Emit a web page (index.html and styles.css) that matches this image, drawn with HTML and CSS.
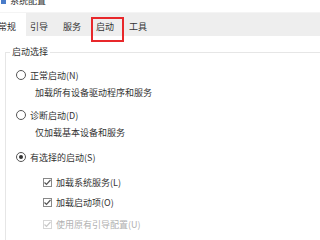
FILE: index.html
```html
<!DOCTYPE html>
<html>
<head>
<meta charset="utf-8">
<link rel="stylesheet" href="styles.css">
</head>
<body>
<div class="win">
  <div class="title">
    <svg class="ticon" width="6" height="8" viewBox="0 0 6 8"><rect x="0" y="0" width="5" height="7" fill="#4a7cc9"/></svg>
    <span>系统配置</span>
  </div>
  <div class="tabs">
    <div class="tab sel">常规</div>
    <div class="tab">引导</div>
    <div class="tab">服务</div>
    <div class="tab">启动</div>
    <div class="tab">工具</div>
  </div>
  <div class="content">
    <div class="group">
      <div class="legend">启动选择</div>
      <div class="opt first"><span class="radio"></span><span>正常启动(N)</span></div>
      <div class="desc">加载所有设备驱动程序和服务</div>
      <div class="opt"><span class="radio"></span><span>诊断启动(D)</span></div>
      <div class="desc second">仅加载基本设备和服务</div>
      <div class="opt"><span class="radio on"></span><span>有选择的启动(S)</span></div>
      <div class="chk"><span class="box"><svg width="9" height="9" viewBox="0 0 9 9"><path d="M1.5 4.5 L3.5 6.5 L7.5 2" fill="none" stroke="#555" stroke-width="1.2"/></svg></span><span>加载系统服务(L)</span></div>
      <div class="chk"><span class="box"><svg width="9" height="9" viewBox="0 0 9 9"><path d="M1.5 4.5 L3.5 6.5 L7.5 2" fill="none" stroke="#555" stroke-width="1.2"/></svg></span><span>加载启动项(O)</span></div>
      <div class="chk dis"><span class="box"><svg width="9" height="9" viewBox="0 0 9 9"><path d="M1.5 4.5 L3.5 6.5 L7.5 2" fill="none" stroke="#c8c8c8" stroke-width="1.2"/></svg></span><span>使用原有引导配置(U)</span></div>
    </div>
  </div>
  <div class="mark"></div>
</div>
</body>
</html>
```
FILE: styles.css
```css
html, body {
  margin: 0;
  padding: 0;
  background: #fff;
  overflow: hidden;
}
.win {
  position: relative;
  width: 320px;
  height: 240px;
  overflow: hidden;
  font-family: "Noto Sans CJK SC", "Noto Sans", sans-serif;
  font-size: 9px;
  color: #333;
}
.title {
  display: flex;
  align-items: center;
  gap: 3px;
  height: 12px;
  margin-top: -5px;
  padding-left: 1px;
}
.title span { line-height: 12px; }
.ticon { flex: none; }
.tabs {
  display: flex;
  height: 23px;
  margin-top: 5px;
  background: #eeeeee;
  border-top: 1px solid #f4f4f4;
}
.tab {
  width: 33px;
  display: flex;
  align-items: center;
  padding: 4px 0 0 4px;
  box-sizing: border-box;
}
.tab.sel {
  background: #fff;
  width: 26px;
  padding-left: 0;
  text-indent: -2px;
}
.content {
  padding: 16px 0 0 5px;
}
.group {
  border-top: 1px solid #e6e6e6;
  border-left: 1px solid #e6e6e6;
  padding: 0 0 0 10px;
  height: 200px;
}
.legend {
  margin-top: -7px;
  margin-left: -6px;
  width: max-content;
  background: #fff;
  padding: 0 2px;
  line-height: 12px;
}
.opt {
  display: flex;
  align-items: center;
  gap: 4px;
  height: 12px;
  margin-top: 10px;
}
.opt.first { margin-top: 11px; }
.radio {
  width: 8px;
  height: 8px;
  border: 1px solid #555;
  border-radius: 50%;
  box-sizing: content-box;
  position: relative;
  flex: none;
}
.radio.on::after {
  content: "";
  position: absolute;
  left: 2px;
  top: 2px;
  width: 4px;
  height: 4px;
  border-radius: 50%;
  background: #333;
}
.desc {
  margin-top: 6px;
  padding-left: 19px;
  line-height: 12px;
  margin-bottom: 10px;
}
.desc.second { margin-bottom: 12px; }
.chk {
  display: flex;
  align-items: center;
  gap: 4px;
  height: 12px;
  margin-top: 8px;
  padding-left: 27px;
}
.opt + .chk { margin-top: 13px; }
.box {
  width: 9px;
  height: 9px;
  border: 1px solid #888;
  box-sizing: border-box;
  display: flex;
  flex: none;
}
.box svg { margin: -1px; }
.chk.dis { color: #b0b0b0; margin-top: 10px; }
.chk.dis .box { border-color: #d6d6d6; }
.mark {
  position: absolute;
  left: 91px;
  top: 17px;
  width: 33px;
  height: 25px;
  border: 2px solid #e8282b;
  box-sizing: border-box;
}
```
